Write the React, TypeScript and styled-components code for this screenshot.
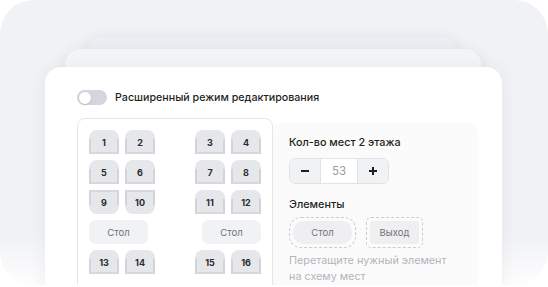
import styled, { createGlobalStyle, css } from "styled-components"

const Global = createGlobalStyle`
  body {
    margin: 0;
    background: #fff;
    font-family: Inter, "Noto Sans", sans-serif;
  }
`

const Scene = styled.div`
  position: relative;
  width: 548px;
  height: 285px;
  box-sizing: border-box;
  padding: 67px 46px 0 45px;
  background: #f1f2f5;
  border-radius: 34px;
  overflow: hidden;

  &::after {
    content: "";
    position: absolute;
    inset: 0;
    background: linear-gradient(
      to bottom,
      rgba(255, 255, 255, 0) 236px,
      rgba(255, 255, 255, 0.9) 285px
    );
    pointer-events: none;
  }
`

const Stack = styled.div`
  position: relative;

  &::before,
  &::after {
    content: "";
    position: absolute;
    height: 80px;
    border-radius: 16px;
  }
  &::before {
    top: -30px;
    left: 42px;
    right: 45px;
    background: linear-gradient(#edeff3, #f6f7f9);
    box-shadow: 0 0 14px rgba(40, 50, 80, 0.08);
  }
  &::after {
    top: -18px;
    left: 20px;
    right: 21px;
    background: linear-gradient(#f3f4f7, #fafbfc);
    box-shadow: 0 0 14px rgba(40, 50, 80, 0.08);
  }
`

const Card = styled.div`
  position: relative;
  z-index: 1;
  height: 240px;
  background: #fff;
  border-radius: 16px;
  padding: 23px 24px 0 32px;
  box-shadow: 0 0 16px rgba(40, 50, 80, 0.07);
`

const ToggleRow = styled.div`
  display: flex;
  align-items: center;
  gap: 8px;
  font-size: 10.7px;
  font-weight: 500;
  color: #1f1f22;
  line-height: 15px;
`

const Track = styled.div`
  width: 30px;
  height: 15px;
  border-radius: 8px;
  background: #d3d6dc;
  padding: 1.5px;
  box-sizing: border-box;
  display: flex;
`

const Knob = styled.div`
  width: 12px;
  height: 12px;
  border-radius: 50%;
  background: #fff;
  box-shadow: 0 1px 2px rgba(0, 0, 0, 0.15);
`

const Panels = styled.div`
  display: flex;
  margin-top: 13px;
`

const Scheme = styled.div`
  width: 196px;
  height: 200px;
  box-sizing: border-box;
  border: 1px solid #e4e6ea;
  border-radius: 8px;
  padding: 11px;
  display: flex;
  justify-content: space-between;
`

const Group = styled.div<{ $end?: boolean }>`
  display: flex;
  flex-direction: column;
  gap: 6px;
  align-items: ${(p) => (p.$end ? "flex-end" : "flex-start")};
  width: 66px;
`

const SeatRow = styled.div`
  display: flex;
  gap: 6px;
`

const Seat = styled.div<{ $flip?: boolean }>`
  position: relative;
  width: 30px;
  height: 24px;
  box-sizing: border-box;
  background: #e6e7eb;
  border-radius: ${(p) => (p.$flip ? "3px 3px 8px 8px" : "8px 8px 3px 3px")};
  display: flex;
  align-items: center;
  justify-content: center;
  font-size: 9px;
  font-weight: 700;
  color: #2a2b2f;

  &::before {
    content: "";
    position: absolute;
    left: 0;
    right: 0;
    border-left: 2px solid #d2d4d9;
    border-right: 2px solid #d2d4d9;
    ${(p) =>
      p.$flip
        ? css`
            top: 0;
            bottom: 9px;
            border-top: 2px solid #d6d8dc;
          `
        : css`
            top: 9px;
            bottom: 0;
            border-bottom: 2px solid #d6d8dc;
          `}
  }

  span {
    position: relative;
  }
`

const Table = styled.div`
  width: 59px;
  height: 24px;
  border-radius: 7px;
  background: #f1f2f4;
  display: flex;
  align-items: center;
  justify-content: center;
  font-size: 9.5px;
  color: #6f7278;
`

const Side = styled.div`
  flex: 1;
  margin-top: 5px;
  background: #fbfbfc;
  border-radius: 8px;
  padding: 12px 16px;
`

const Label = styled.div<{ $gap?: number }>`
  margin-top: ${(p) => p.$gap ?? 0}px;
  font-size: 10.8px;
  font-weight: 500;
  color: #1f1f22;
  line-height: 16px;
`

const Stepper = styled.div`
  display: inline-flex;
  margin-top: 7px;
  height: 26px;
  border: 1px solid #e1e3e7;
  border-radius: 6px;
  overflow: hidden;
  box-sizing: border-box;
`

const StepBtn = styled.div`
  width: 30px;
  background: #f1f2f4;
  display: flex;
  align-items: center;
  justify-content: center;
`

const StepValue = styled.div`
  width: 36px;
  background: #fff;
  border-left: 1px solid #e1e3e7;
  border-right: 1px solid #e1e3e7;
  display: flex;
  align-items: center;
  justify-content: center;
  font-size: 11.5px;
  color: #9a9ca2;
`

const Elements = styled.div`
  display: flex;
  gap: 10px;
  margin-top: 4px;
`

const Slot = styled.div<{ $w: number }>`
  width: ${(p) => p.$w}px;
  height: 31px;
  box-sizing: border-box;
  border: 1px dashed #c9ccd2;
  border-radius: ${(p) => (p.$w > 60 ? "12px" : "5px")};
  padding: 3px;
  display: flex;
`

const Piece = styled.div<{ $round?: boolean }>`
  flex: 1;
  background: #efeff2;
  border-radius: ${(p) => (p.$round ? "10px" : "3px")};
  display: flex;
  align-items: center;
  justify-content: center;
  font-size: 9.5px;
  color: #6f7278;
`

const Hint = styled.div`
  margin-top: 5px;
  font-size: 10.8px;
  line-height: 16px;
  color: #b2b5bb;
  width: 165px;
`

const seatRows: [number, number][][] = [
  [[1, 2], [3, 4]],
  [[5, 6], [7, 8]],
  [[9, 10], [11, 12]],
]

function SeatPair({ nums, flip }: { nums: number[]; flip?: boolean }) {
  return (
    <SeatRow>
      {nums.map((n) => (
        <Seat key={n} $flip={flip}>
          <span>{n}</span>
        </Seat>
      ))}
    </SeatRow>
  )
}

function SeatGroup({ side, end }: { side: 0 | 1; end?: boolean }) {
  const last = side === 0 ? [13, 14] : [15, 16]
  return (
    <Group $end={end}>
      {seatRows.map((r, i) => (
        <SeatPair key={i} nums={r[side]} flip={side === 0 && i === 2} />
      ))}
      <Table>Стол</Table>
      <SeatPair nums={last} />
    </Group>
  )
}

function App() {
  return (
    <>
      <Global />
      <Scene>
        <Stack>
          <Card>
            <ToggleRow>
              <Track>
                <Knob />
              </Track>
              Расширенный режим редактирования
            </ToggleRow>
            <Panels>
              <Scheme>
                <SeatGroup side={0} />
                <SeatGroup side={1} end />
              </Scheme>
              <Side>
                <Label>Кол-во мест 2 этажа</Label>
                <Stepper>
                  <StepBtn>
                    <svg width="10" height="10" viewBox="0 0 10 10">
                      <path d="M1 5h8" stroke="#1f1f22" strokeWidth="2" />
                    </svg>
                  </StepBtn>
                  <StepValue>53</StepValue>
                  <StepBtn>
                    <svg width="10" height="10" viewBox="0 0 10 10">
                      <path d="M1 5h8M5 1v8" stroke="#1f1f22" strokeWidth="2" />
                    </svg>
                  </StepBtn>
                </Stepper>
                <Label $gap={13}>Элементы</Label>
                <Elements>
                  <Slot $w={67}>
                    <Piece $round>Стол</Piece>
                  </Slot>
                  <Slot $w={57}>
                    <Piece>Выход</Piece>
                  </Slot>
                </Elements>
                <Hint>Перетащите нужный элемент на схему мест</Hint>
              </Side>
            </Panels>
          </Card>
        </Stack>
      </Scene>
    </>
  )
}

export default App
